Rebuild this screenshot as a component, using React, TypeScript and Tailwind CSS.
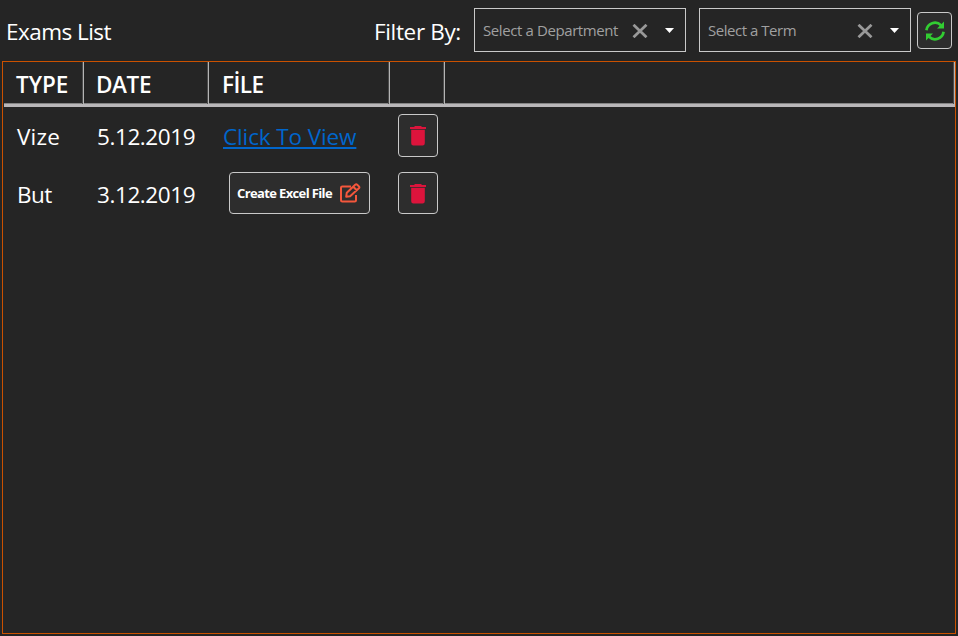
import type { ReactNode } from "react";

function Combo({ children }: { children: ReactNode }) {
  return (
    <div className="flex h-[44px] w-[212px] shrink-0 items-center border border-[#c9c9c9] pl-[8px] text-[15px] leading-[20px] text-[#a0a0a0]">
      <span className="w-[149px] whitespace-nowrap">{children}</span>
      <svg className="mt-px h-[14px] w-[16px]" viewBox="0 0 16 14" fill="none" stroke="#999" strokeWidth="2.8">
        <path d="M1.5 .8 14.5 13.2M14.5 .8 1.5 13.2" />
      </svg>
      <svg className="ml-[17px] h-[5px] w-[9px]" viewBox="0 0 9 5" fill="#fff">
        <path d="M0 0h9L4.5 5z" />
      </svg>
    </div>
  );
}

function TrashButton({ height }: { height: string }) {
  return (
    <button className={`flex w-[40px] justify-center rounded-[4px] border border-[#c9c9c9] bg-[#2d2d2d] pt-[10px] ${height}`}>
      <svg className="h-[21px] w-[16px]" viewBox="0 0 16 21" fill="#dc143c">
        <path d="M0 2h4L5 1h6l1 1h4v2H0zM1.2 4.7h13.6v13.5q0 2.3-2.3 2.3h-9q-2.3 0-2.3-2.3z" />
      </svg>
    </button>
  );
}

const cell = "h-full border-r border-[#b4b4b4] shadow-[inset_-1px_0_0_#4c4c4c] pt-[7px] whitespace-nowrap";

export default function App() {
  return (
    <div className="flex h-[636px] w-[958px] flex-col overflow-hidden bg-[#252525] font-['Open_Sans','Noto_Sans',sans-serif] text-[22.5px] leading-[32px] text-white">
      <header className="flex h-[61px] shrink-0 pt-[8px]">
        <h1 className="w-[374px] pt-[8px] pl-[6px] whitespace-nowrap"><span className="tracking-[-0.53px]">Exams List</span></h1>
        <div className="w-[100px] pt-[8px] whitespace-nowrap"><span className="tracking-[-0.35px]">Filter By:</span></div>
        <Combo><span className="tracking-[-0.4px]">Select a Department</span></Combo>
        <div className="ml-[13px]"><Combo><span className="tracking-[-0.47px]">Select a Term</span></Combo></div>
        <button className="mt-[4px] ml-[6px] flex h-[37px] w-[35px] items-center justify-center rounded-[4px] border border-[#c9c9c9] bg-[#2d2d2d]">
          <svg className="h-[20px] w-[20px]" viewBox="0 0 20 20" fill="none" stroke="#32cd32" strokeWidth="2.7">
            <path d="M1.4 9.2A8.7 8.7 0 0 1 16 4.2M18.6 10.8A8.7 8.7 0 0 1 4 15.8" />
            <path d="M19 .6v7h-7zM1 19.4v-7h7z" fill="#32cd32" stroke="none" />
          </svg>
        </button>
      </header>
      <main className="ml-[2px] h-[573px] w-[954px] border border-[#ca5100]">
        <div className="ml-px flex h-[45px] border-b-[3px] border-[#b9b7b9] font-semibold shadow-[inset_0_-1px_0_#858585]">
          <div className={`${cell} w-[80px] pl-[12px]`}><span className="tracking-[-0.05px]">TYPE</span></div>
          <div className={`${cell} w-[125px] pl-[12px]`}><span className="tracking-[-0.4px]">DATE</span></div>
          <div className={`${cell} w-[181px] pl-[13px]`}><span className="tracking-[-0.5px]">FİLE</span></div>
          <div className={`${cell} w-[55px]`} />
          <div className={`${cell} w-[510px]`} />
        </div>
        <div className="flex h-[58px] pt-[7px] whitespace-nowrap">
          <div className="w-[94px] pt-[7px] pl-[14px]"><span className="tracking-[0.2px]">Vize</span></div>
          <div className="w-[126px] pt-[7px]"><span className="tracking-[-0.42px]">5.12.2019</span></div>
          <div className="w-[175px] pt-[7px]"><a className="tracking-[-0.12px] text-[#0066cc] underline decoration-2 underline-offset-[2px]">Click To View</a></div>
          <TrashButton height="h-[43px]" />
        </div>
        <div className="flex h-[58px] pt-[7px] whitespace-nowrap">
          <div className="w-[94px] pt-[7px] pl-[14px]"><span className="tracking-[-0.6px]">But</span></div>
          <div className="w-[132px] pt-[7px]"><span className="tracking-[-0.42px]">3.12.2019</span></div>
          <button className="mr-[28px] flex h-[42px] w-[141px] items-center rounded-[4px] border border-[#c9c9c9] bg-[#2d2d2d] pl-[7px] text-[13px] leading-[18px] font-bold">
            <span className="w-[103px] text-left tracking-[-0.63px]">Create Excel File</span>
            <svg className="h-[20px] w-[21px]" viewBox="0 0 21 20" fill="none" stroke="#f4573c" strokeWidth="2" strokeLinejoin="round">
              <path d="M11 3.5H2.3Q1 3.5 1 4.8v12.4q0 1.3 1.3 1.3h12.4q1.3 0 1.3-1.3V12M6.2 13.7l.6-4L15.2 1.7q1-.9 2 0l1.7 1.7q.9 1 0 1.9l-8.8 7.9zM13.2 3.7l3.6 3.6" />
            </svg>
          </button>
          <TrashButton height="h-[42px]" />
        </div>
      </main>
    </div>
  );
}
